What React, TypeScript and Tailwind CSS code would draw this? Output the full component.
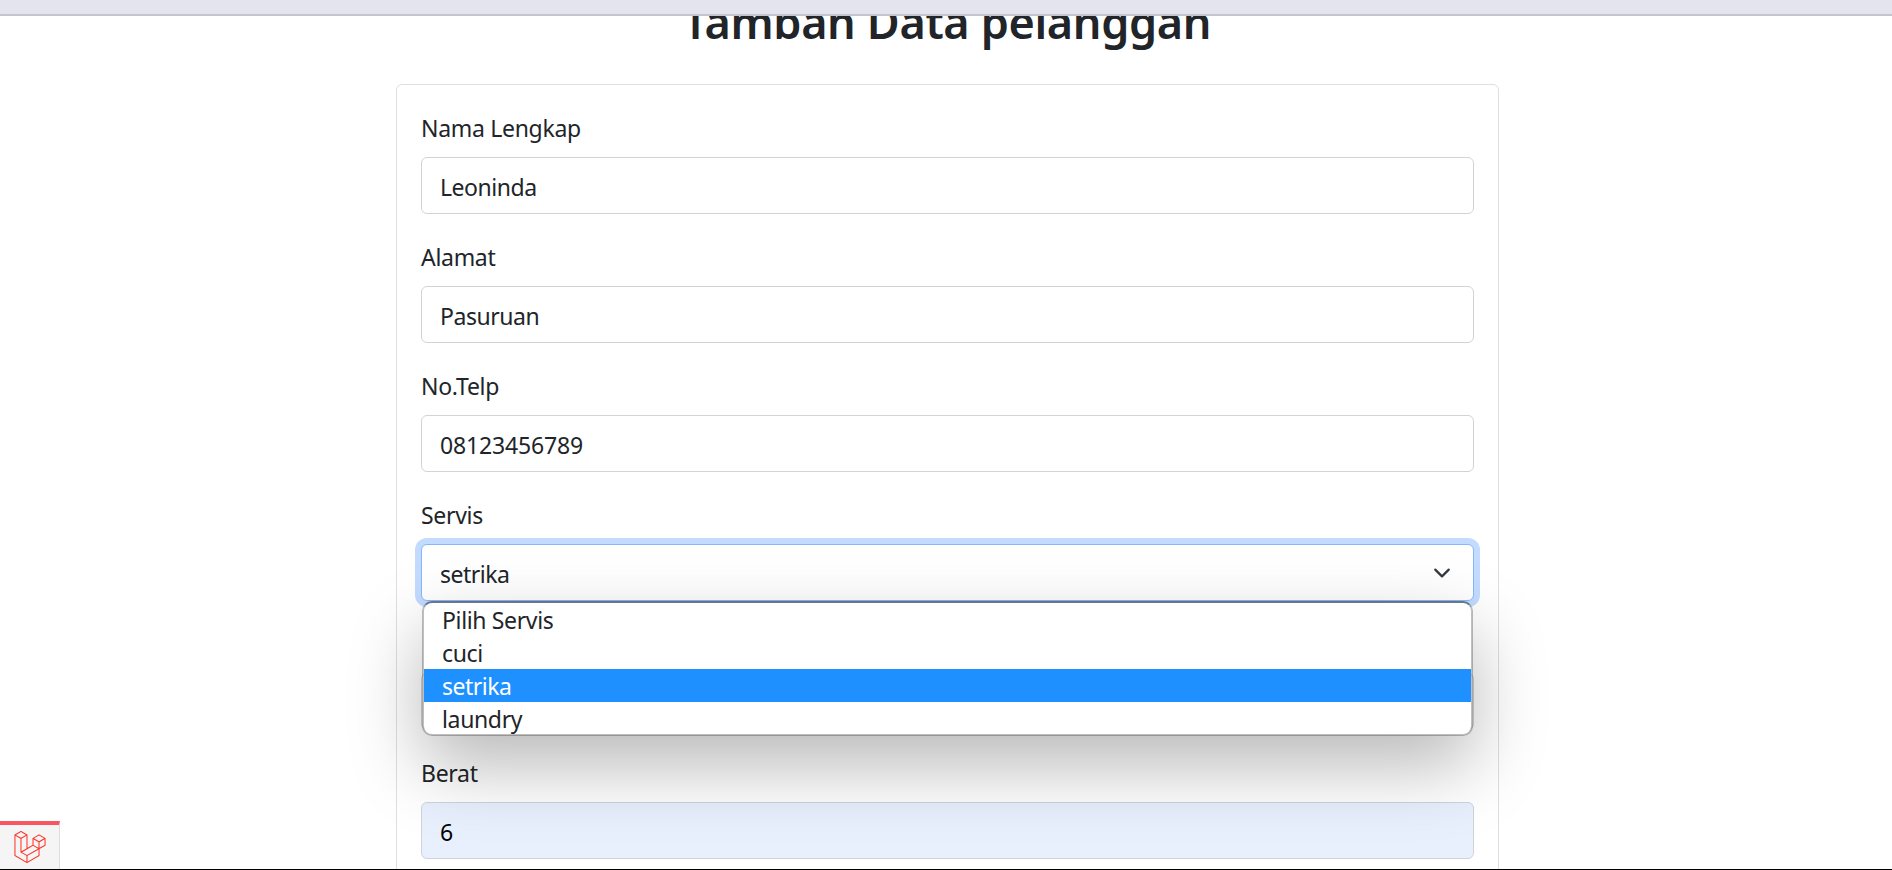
import React from "react";
import { FaLaravel } from "react-icons/fa";

const labelClass = "block h-9 mb-3 pt-px text-[23px] leading-9 tracking-[-0.3px]";
const boxClass =
  "h-[57px] w-full rounded-md border border-[#ced4da] px-[18px] pt-0.5 text-[23px] leading-[54px]";

function Field({
  label,
  value,
  filled,
  numeric,
}: {
  label?: string;
  value?: string;
  filled?: boolean;
  numeric?: boolean;
}) {
  return (
    <div className="mb-6">
      <label className={labelClass}>{label}</label>
      <div
        className={[
          boxClass,
          filled ? "bg-[#e8f0fe] text-black" : "bg-white",
          numeric ? "tracking-[-0.15px]" : "tracking-[-0.45px]",
        ].join(" ")}
      >
        {value}
      </div>
    </div>
  );
}

function Options() {
  const options = ["Pilih Servis", "cuci", "setrika", "laundry"];
  return (
    <div className="absolute left-px right-px top-[57px] z-10 h-[135px] rounded-[10px] border-2 border-black/25 border-t-black/45 bg-white bg-clip-padding shadow-[0_30px_72px_rgba(0,0,0,0.28)]">
      <div className="h-full overflow-hidden rounded-lg">
        {options.map((o) => (
          <div
            key={o}
            className={
              o === "setrika"
                ? "h-[33px] bg-[#1e90ff] pl-[18px] text-[23px] leading-[35px] tracking-[-0.5px] text-white"
                : "h-[33px] pl-[18px] text-[23px] leading-[35px] tracking-[-0.35px]"
            }
          >
            {o}
          </div>
        ))}
      </div>
    </div>
  );
}

export default function App() {
  return (
    <div className="relative flex h-[870px] w-full flex-col overflow-hidden border-b border-black bg-white font-['Noto_Sans',sans-serif] text-[#212529]">
      <div className="z-10 h-4 shrink-0 border-b-2 border-[#c5c5d0] bg-[#e4e4ee]" />
      <h1 className="-mt-[18px] h-[70px] shrink-0 pl-0.5 text-center text-[45px] font-semibold leading-[48px] tracking-[-0.35px]">
        Tambah Data pelanggan
      </h1>
      <main className="ml-[396px] mt-4 h-[900px] w-[1103px] shrink-0 rounded-md border border-black/[0.125] p-6">
        <Field label="Nama Lengkap" value="Leoninda" />
        <Field label="Alamat" value="Pasuruan" />
        <Field label="No.Telp" value="08123456789" numeric />
        <div className="mb-6">
          <label className={labelClass}>Servis</label>
          <div className="relative">
            <div className="flex h-[57px] items-center justify-between rounded-md border border-[#86b7fe] bg-white pl-[18px] pr-[22px] text-[23px] tracking-[-0.5px] shadow-[0_0_0_6px_#c2dbfe]">
              <span className="pt-1">setrika</span>
              <svg className="size-[18px]" viewBox="0 0 16 16" fill="none" stroke="#343a40" strokeWidth="2" strokeLinecap="round" strokeLinejoin="round">
                <path d="M2 5l6 6 6-6" />
              </svg>
            </div>
            <Options />
          </div>
        </div>
        <Field />
        <Field label="Berat" value="6" filled numeric />
      </main>
      <div className="absolute bottom-0 left-0 flex h-12 w-[60px] items-center justify-center border-r border-t-4 border-r-[#ddd] border-t-[#fa5661] bg-[#f5f5f5] text-[#ff2d20]">
        <FaLaravel className="size-8" />
      </div>
    </div>
  );
}
